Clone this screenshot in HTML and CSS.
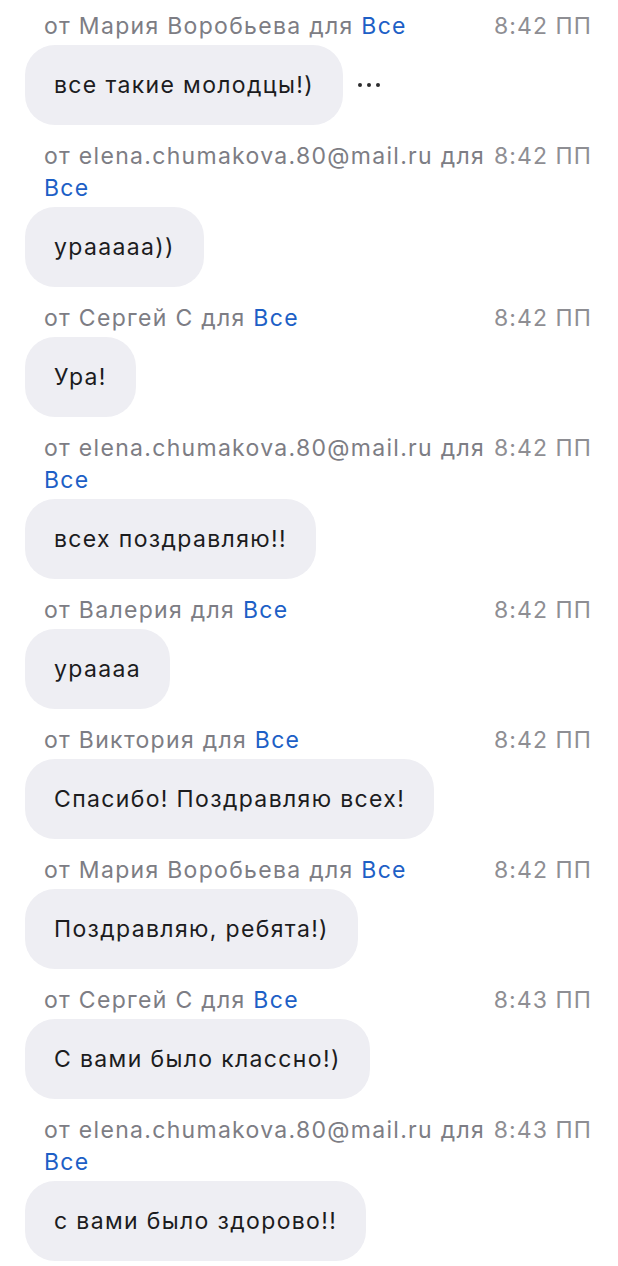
FILE: index.html
```html
<!DOCTYPE html>
<html lang="ru">
<head>
<meta charset="utf-8">
<link rel="stylesheet" href="styles.css">
</head>
<body>
<div class="chat">
  <div class="msg">
    <div class="meta"><span class="from">от Мария Воробьева для <span class="to">Все</span></span><span class="time">8:42 ПП</span></div>
    <div class="row"><div class="bubble">все такие молодцы!)</div><div class="more"><i></i><i></i><i></i></div></div>
  </div>
  <div class="msg">
    <div class="meta"><span class="from">от elena.chumakova.80@mail.ru для <span class="to">Все</span></span><span class="time">8:42 ПП</span></div>
    <div class="row"><div class="bubble">урааааа))</div></div>
  </div>
  <div class="msg">
    <div class="meta"><span class="from">от Сергей С для <span class="to">Все</span></span><span class="time">8:42 ПП</span></div>
    <div class="row"><div class="bubble">Ура!</div></div>
  </div>
  <div class="msg">
    <div class="meta"><span class="from">от elena.chumakova.80@mail.ru для <span class="to">Все</span></span><span class="time">8:42 ПП</span></div>
    <div class="row"><div class="bubble">всех поздравляю!!</div></div>
  </div>
  <div class="msg">
    <div class="meta"><span class="from">от Валерия для <span class="to">Все</span></span><span class="time">8:42 ПП</span></div>
    <div class="row"><div class="bubble">ураааа</div></div>
  </div>
  <div class="msg">
    <div class="meta"><span class="from">от Виктория для <span class="to">Все</span></span><span class="time">8:42 ПП</span></div>
    <div class="row"><div class="bubble">Спасибо! Поздравляю всех!</div></div>
  </div>
  <div class="msg">
    <div class="meta"><span class="from">от Мария Воробьева для <span class="to">Все</span></span><span class="time">8:42 ПП</span></div>
    <div class="row"><div class="bubble">Поздравляю, ребята!)</div></div>
  </div>
  <div class="msg">
    <div class="meta"><span class="from">от Сергей С для <span class="to">Все</span></span><span class="time">8:43 ПП</span></div>
    <div class="row"><div class="bubble">С вами было классно!)</div></div>
  </div>
  <div class="msg">
    <div class="meta"><span class="from">от elena.chumakova.80@mail.ru для <span class="to">Все</span></span><span class="time">8:43 ПП</span></div>
    <div class="row"><div class="bubble">с вами было здорово!!</div></div>
  </div>
</div>
</body>
</html>
```

FILE: styles.css
```css
html, body {
  margin: 0;
  padding: 0;
  background: #ffffff;
}
body {
  font-family: Inter, "Noto Sans", sans-serif;
  -webkit-font-smoothing: antialiased;
}
.chat {
  display: flex;
  flex-direction: column;
  gap: 15px;
  padding-top: 10px;
}
.msg {
  display: flex;
  flex-direction: column;
  gap: 3px;
}
.meta {
  display: flex;
  align-items: flex-start;
  gap: 6px;
  padding: 0 26px 0 44px;
  font-size: 23px;
  letter-spacing: 1.3px;
  line-height: 32px;
  color: #7d7d84;
}
.from {
  flex: 1;
}
.to {
  color: #1d5fc6;
}
.time {
  color: #8e8e93;
  white-space: nowrap;
  letter-spacing: 1.1px;
}
.row {
  display: flex;
  align-items: center;
  padding-left: 25px;
}
.bubble {
  background: #eeeef3;
  border-radius: 30px;
  height: 80px;
  box-sizing: border-box;
  padding: 0 29px;
  display: flex;
  align-items: center;
  font-size: 23px;
  letter-spacing: 1.35px;
  color: #1c1c1e;
}
.more {
  display: flex;
  gap: 5px;
  margin-left: 15px;
}
.more i {
  width: 4px;
  height: 4px;
  border-radius: 50%;
  background: #2c2c2e;
}
```
